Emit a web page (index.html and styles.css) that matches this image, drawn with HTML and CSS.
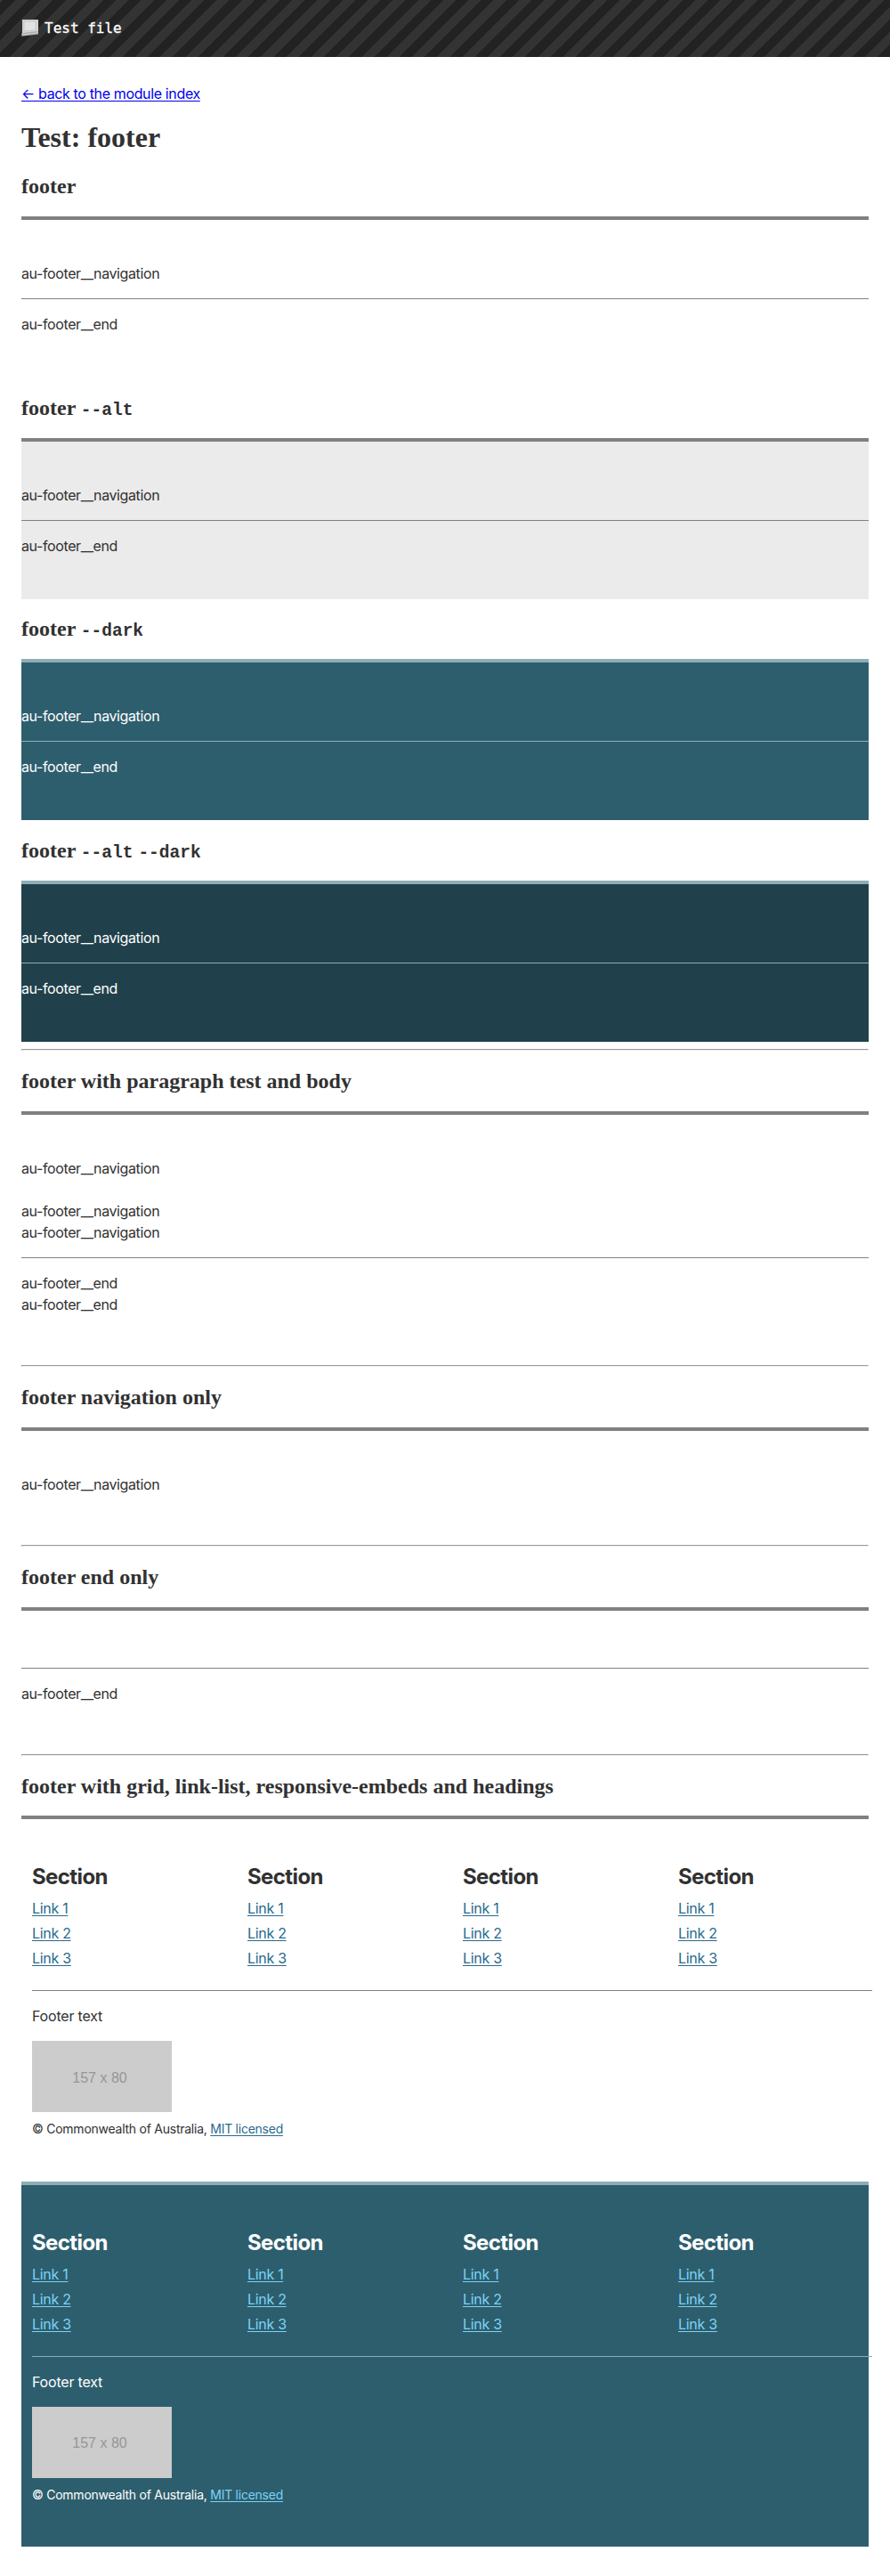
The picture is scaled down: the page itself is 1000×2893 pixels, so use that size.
FILE: index.html
```html
<!DOCTYPE html>
<html lang="en">
<head>
<meta charset="utf-8">
<title>Test: footer</title>
<link rel="stylesheet" href="styles.css">
</head>
<body>
<header class="header">
<svg class="header-icon" width="20" height="20" viewBox="0 0 20 20"><path d="M1 1h18v15L1 17z" fill="#d4d4d4"/><path d="M3 3h13v10L3 14z" fill="#e2e2e2" stroke="#bdbdbd" stroke-width=".7"/><path d="M0 16.2L19 14v3.400L.5 19.800z" fill="#a9a9a9"/><path d="M1 18l18-2.300" stroke="#ddd" stroke-width=".8"/></svg>
<span>Test file</span>
</header>
<main class="content">
<a class="back" href="#">← back to the module index</a>
<h1>Test: footer</h1>

<h2>footer</h2>
<footer class="au-footer"><div class="nav"><span class="t">au-footer__navigation</span></div><div class="end"><span class="t">au-footer__end</span></div></footer>

<h2>footer <code>--alt</code></h2>
<footer class="au-footer alt"><div class="nav"><span class="t">au-footer__navigation</span></div><div class="end"><span class="t">au-footer__end</span></div></footer>

<h2>footer <code>--dark</code></h2>
<footer class="au-footer dark"><div class="nav"><span class="t">au-footer__navigation</span></div><div class="end"><span class="t">au-footer__end</span></div></footer>

<h2>footer <code>--alt</code> <code>--dark</code></h2>
<footer class="au-footer dark alt-dark"><div class="nav"><span class="t">au-footer__navigation</span></div><div class="end"><span class="t">au-footer__end</span></div></footer>

<hr>
<h2>footer with paragraph test and body</h2>
<footer class="au-footer"><div class="nav"><p><span class="t">au-footer__navigation</span></p><p class="spaced"><span class="t">au-footer__navigation</span><br><span class="t">au-footer__navigation</span></p></div><div class="end"><span class="t">au-footer__end</span><br><span class="t">au-footer__end</span></div></footer>

<hr>
<h2>footer navigation only</h2>
<footer class="au-footer"><div class="nav only"><span class="t">au-footer__navigation</span></div></footer>

<hr>
<h2>footer end only</h2>
<footer class="au-footer"><div class="nav"></div><div class="end"><span class="t">au-footer__end</span></div></footer>

<hr>
<h2>footer with grid, link-list, responsive-embeds and headings</h2>
<footer class="au-footer">
<div class="container">
<div class="nav row">
<div><h3>Section</h3><ul><li><a href="#">Link 1</a></li><li><a href="#">Link 2</a></li><li><a href="#">Link 3</a></li></ul></div>
<div><h3>Section</h3><ul><li><a href="#">Link 1</a></li><li><a href="#">Link 2</a></li><li><a href="#">Link 3</a></li></ul></div>
<div><h3>Section</h3><ul><li><a href="#">Link 1</a></li><li><a href="#">Link 2</a></li><li><a href="#">Link 3</a></li></ul></div>
<div><h3>Section</h3><ul><li><a href="#">Link 1</a></li><li><a href="#">Link 2</a></li><li><a href="#">Link 3</a></li></ul></div>
</div>
<div class="end"><p class="footer-text">Footer text</p><div class="placeholder">157 x 80</div><small>© Commonwealth of Australia, <a href="#">MIT licensed</a></small></div>
</div>
</footer>
<footer class="au-footer dark">
<div class="container">
<div class="nav row">
<div><h3>Section</h3><ul><li><a href="#">Link 1</a></li><li><a href="#">Link 2</a></li><li><a href="#">Link 3</a></li></ul></div>
<div><h3>Section</h3><ul><li><a href="#">Link 1</a></li><li><a href="#">Link 2</a></li><li><a href="#">Link 3</a></li></ul></div>
<div><h3>Section</h3><ul><li><a href="#">Link 1</a></li><li><a href="#">Link 2</a></li><li><a href="#">Link 3</a></li></ul></div>
<div><h3>Section</h3><ul><li><a href="#">Link 1</a></li><li><a href="#">Link 2</a></li><li><a href="#">Link 3</a></li></ul></div>
</div>
<div class="end"><p class="footer-text">Footer text</p><div class="placeholder">157 x 80</div><small>© Commonwealth of Australia, <a href="#">MIT licensed</a></small></div>
</div>
</footer>
</main>
</body>
</html>
```
FILE: styles.css
```css
* { box-sizing: border-box; }
body {
  margin: 0;
  background: #fff;
  color: #313131;
  font-family: Inter, sans-serif;
  font-size: 16px;
  line-height: 24px;
}
.header {
  height: 64px;
  padding: 0 24px;
  display: flex;
  align-items: center;
  gap: 6px;
  color: #fff;
  font: 16px/24px "DejaVu Sans Mono", monospace;
  -webkit-text-stroke: 0.3px #fff;
  background: repeating-linear-gradient(-45deg, #222, #222 10px, #333 10px, #333 20px);
}
.header-icon { flex: none; margin-bottom: 3px; }
.content { padding: 29px 24px 31px; }
.back { display: inline-block; height: 24px; color: #00e; letter-spacing: -0.36px; text-decoration-thickness: 1px; text-underline-offset: 2px; }
h1, h2 { font-family: "Liberation Serif", serif; font-weight: bold; }
h1 { font-size: 32px; line-height: 37px; margin: 19px 0 21.82px; }
h2 { font-size: 24px; line-height: 28px; margin: 19.92px 0; }
h2 code { font: bold 19.5px/20px "Liberation Mono", monospace; }
hr { margin: 8px 0; border: 1px solid; border-color: #9a9a9a #eee #eee #9a9a9a; height: 2px; }
p { margin: 0; }

.au-footer {
  border-top: 4px solid #808080;
  padding: 48px 0;
}
.t { letter-spacing: -0.39px; }
.nav { padding-bottom: 16px; }
.nav.only { padding-bottom: 0; }
.spaced { margin-top: 24px; }
.end { border-top: 1px solid #808080; padding-top: 16px; }
.alt { background: #ebebeb; }
.dark { background: #2d5e6d; color: #fff; border-color: #8fadb5; }
.dark .end { border-color: #8fadb5; }
.alt-dark { background: #20414b; }

.container { width: 968px; padding: 0 12px; }
.row { display: grid; grid-template-columns: repeat(4, 242px); padding-bottom: 24px; }
h3 { margin: 0 0 6px; font-size: 24px; line-height: 34px; font-weight: 700; letter-spacing: -0.6px; }
ul { list-style: none; margin: 0; padding: 0; display: grid; gap: 4px; }
.au-footer a { color: #2a6a8e; text-decoration-thickness: 1px; text-underline-offset: 2px; }
.au-footer.dark a { color: #7bd3f7; }
li { letter-spacing: -0.3px; }
.footer-text { margin-bottom: 16px; letter-spacing: -0.2px; }
.placeholder {
  width: 157px;
  height: 80px;
  padding: 3px 5px 0 0;
  display: flex;
  align-items: center;
  justify-content: center;
  background: #ccc;
  color: #969696;
  font: 16px "Liberation Sans", sans-serif;
}
small { display: block; margin-top: 8px; padding-bottom: 0.5px; font-size: 14px; line-height: 21px; letter-spacing: -0.25px; }
```
